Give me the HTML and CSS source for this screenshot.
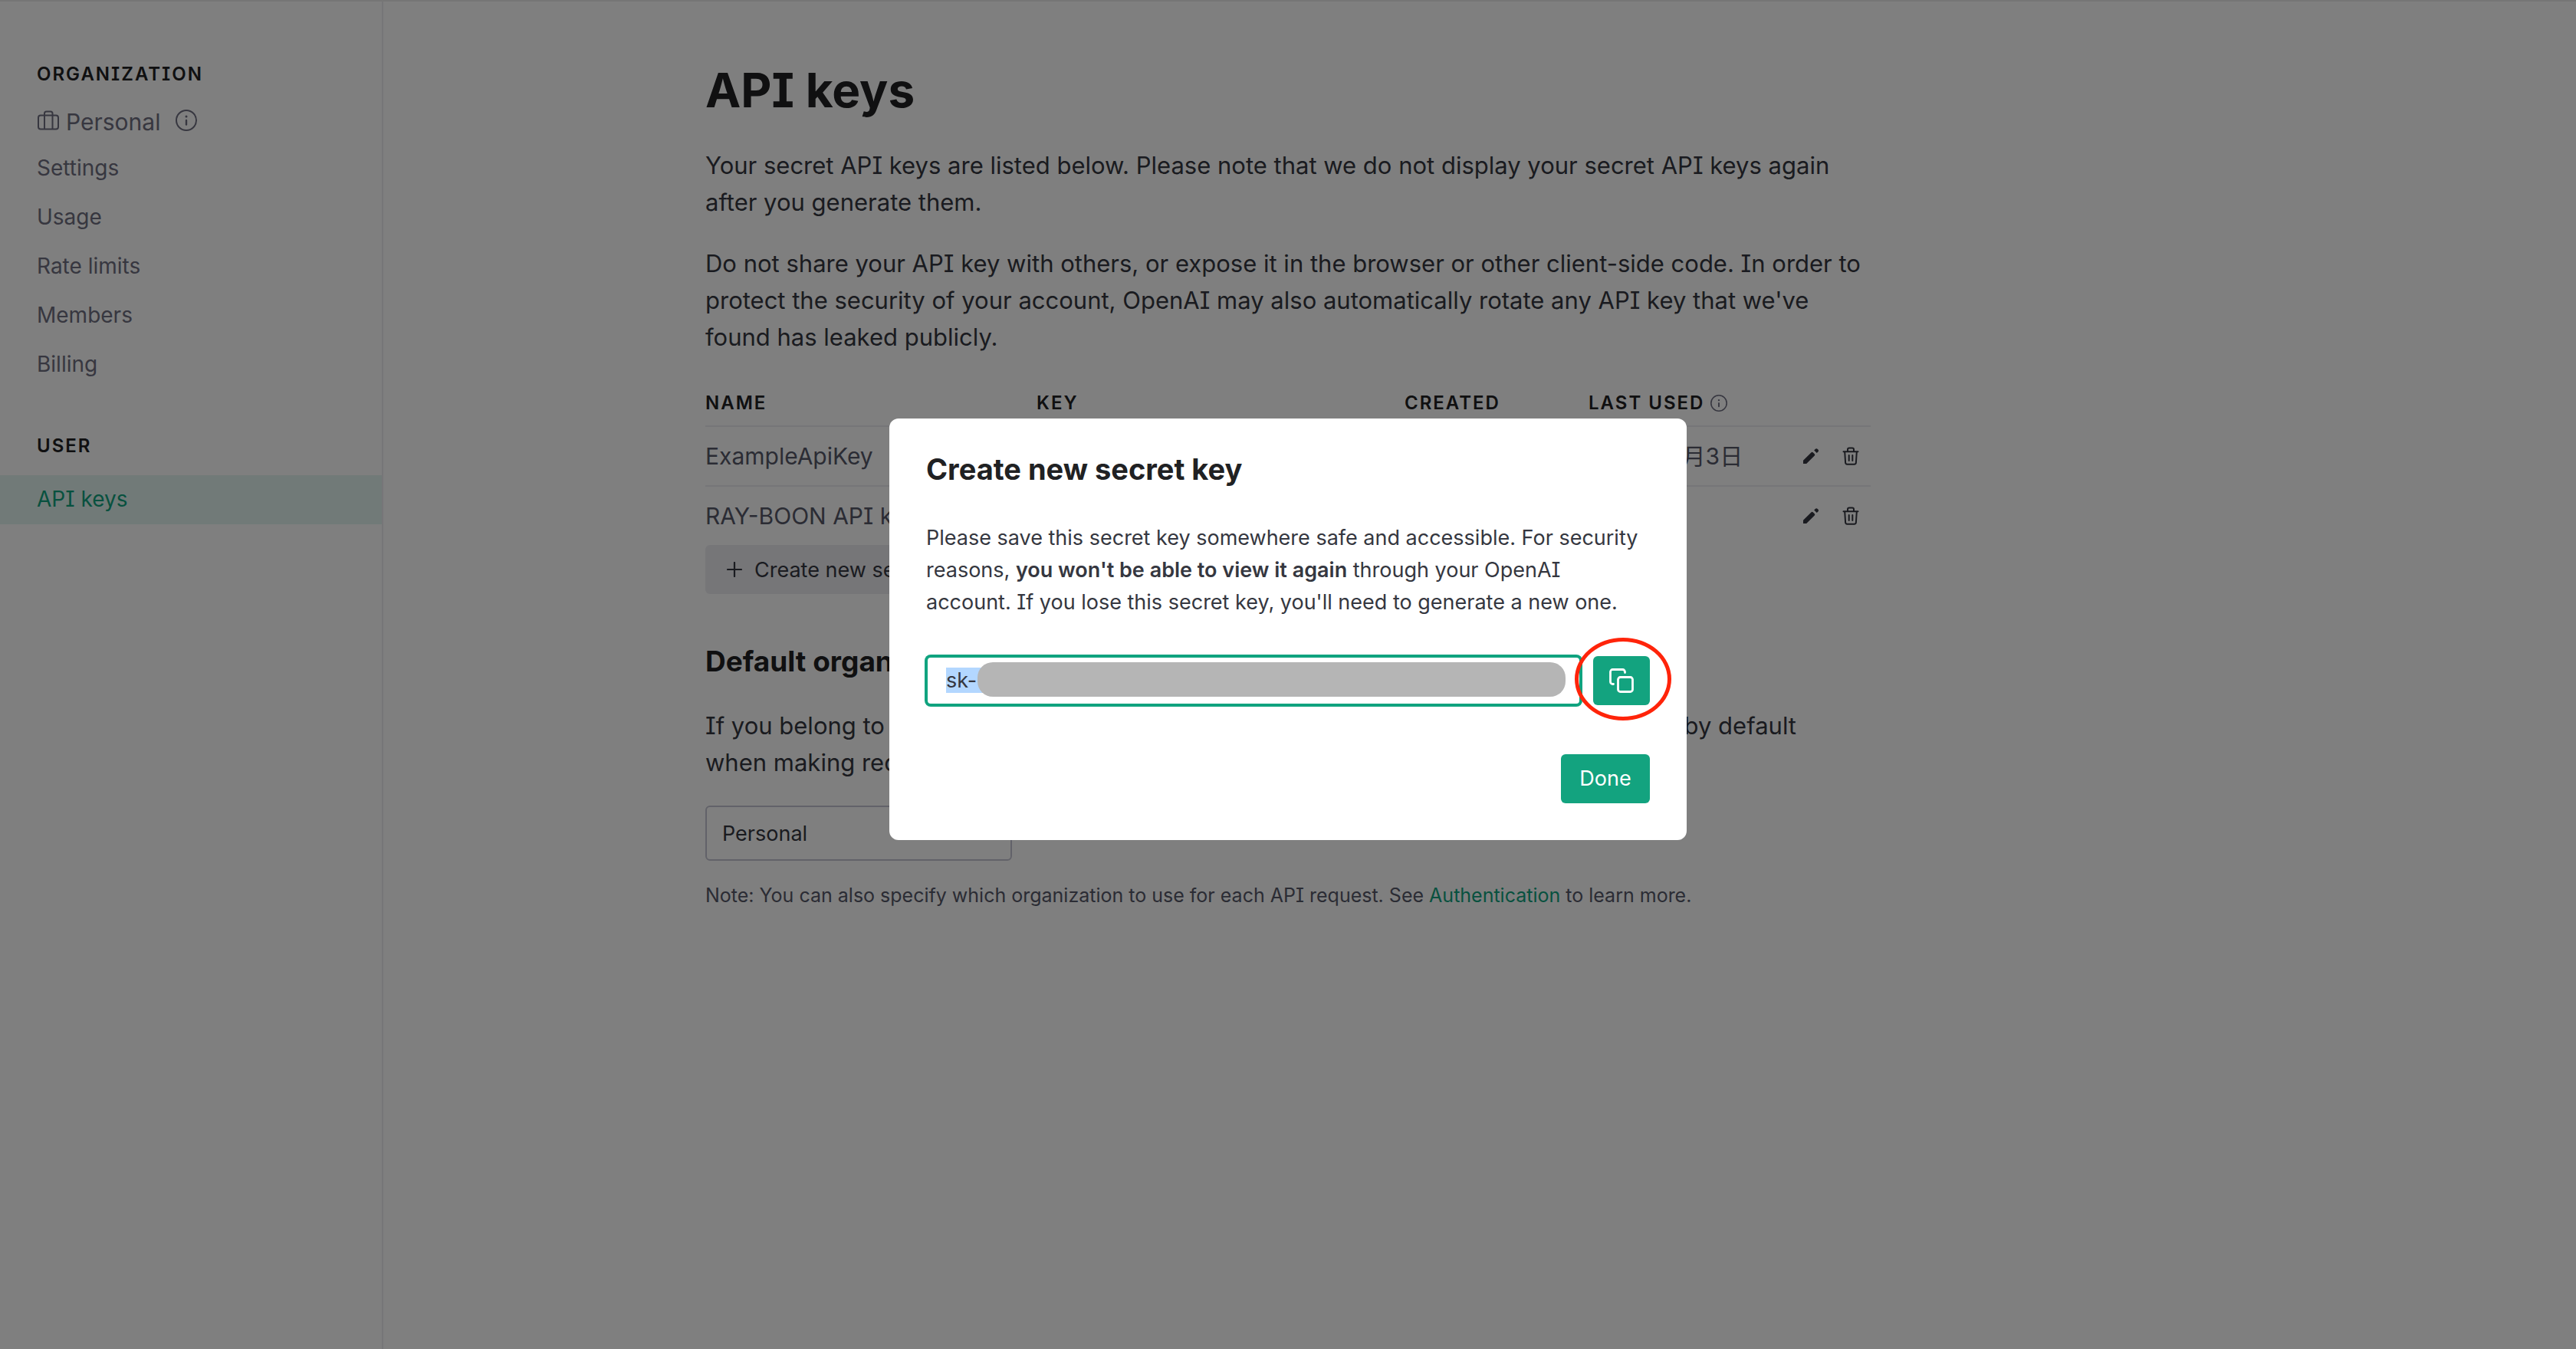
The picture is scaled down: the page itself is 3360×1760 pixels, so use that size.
FILE: index.html
```html
<!DOCTYPE html>
<html lang="en">
<head>
<meta charset="utf-8">
<title>API keys</title>
<link rel="stylesheet" href="styles.css">
</head>
<body>
<svg class="sprite" aria-hidden="true">
  <symbol id="info" viewBox="0 0 28 28"><circle cx="14" cy="14" r="13" fill="none" stroke="currentColor" stroke-width="2"/><path d="M14 14v5.500" fill="none" stroke="currentColor" stroke-width="2.400" stroke-linecap="round"/><circle cx="14" cy="9" r="1.500" fill="currentColor"/></symbol>
  <symbol id="pencil" viewBox="0 0 24 24"><path fill="currentColor" d="M2 22v-4.200L12.600 7.200a1.500 1.500 0 0 1 2.100 0l2.100 2.100a1.500 1.500 0 0 1 0 2.100L6.200 22zM16.200 4.600l1.500-1.700a2.200 2.200 0 0 1 3.100 0l.6.6a2.200 2.200 0 0 1 0 3.100l-1.700 1.500z"/></symbol>
  <symbol id="trash" viewBox="0 0 24 24"><path fill="none" stroke="currentColor" stroke-width="2" stroke-linecap="round" stroke-linejoin="round" d="M2.500 6.200h19M8 6V3.500a2 2 0 0 1 2-2h4a2 2 0 0 1 2 2V6M4.200 6.500l.9 14a2.300 2.300 0 0 0 2.300 2.200h9.200a2.300 2.300 0 0 0 2.300-2.200l.9-14M9.700 11v7M14.300 11v7"/></symbol>
</svg>

<div class="page">
  <nav class="sidebar" aria-label="Account">
    <h2 class="label">ORGANIZATION</h2>
    <div class="org">
      <svg class="org-icon" viewBox="0 0 30 28" aria-hidden="true"><g fill="none" stroke="currentColor" stroke-width="2"><rect x="2" y="7.500" width="26" height="18" rx="3"/><path d="M10 25.500V5a2.500 2.500 0 0 1 2.500-2.500h5.500A2.500 2.500 0 0 1 20.500 5v20.500"/></g></svg>
      <span class="org-name">Personal</span>
      <svg class="info-icon" aria-hidden="true"><use href="#info"/></svg>
    </div>
    <ul class="links">
      <li><a href="#settings">Settings</a></li>
      <li><a href="#usage">Usage</a></li>
      <li><a href="#limits">Rate limits</a></li>
      <li><a href="#members">Members</a></li>
      <li><a href="#billing">Billing</a></li>
    </ul>
    <h2 class="label user-label">USER</h2>
    <ul class="links">
      <li><a class="current" href="#keys" aria-current="page">API keys</a></li>
    </ul>
  </nav>

  <main class="main">
    <div class="content">
      <h1>API keys</h1>
      <p class="copy">Your secret API keys are listed below. Please note that we do not display your secret API keys again after you generate them.</p>
      <p class="copy">Do not share your API key with others, or expose it in the browser or other client-side code. In order to protect the security of your account, OpenAI may also automatically rotate any API key that we've found has leaked publicly.</p>

      <table class="keys">
        <colgroup><col class="c-name"><col class="c-key"><col class="c-created"><col class="c-used"><col class="c-actions"></colgroup>
        <thead>
          <tr>
            <th scope="col">NAME</th>
            <th scope="col">KEY</th>
            <th scope="col">CREATED</th>
            <th scope="col"><span class="used">LAST USED <svg class="info-small" aria-hidden="true"><use href="#info"/></svg></span></th>
            <td></td>
          </tr>
        </thead>
        <tbody>
          <tr>
            <td>ExampleApiKey</td>
            <td></td>
            <td></td>
            <td>2023年8月3日</td>
            <td><div class="actions"><button aria-label="Edit"><svg><use href="#pencil"/></svg></button><button aria-label="Delete"><svg><use href="#trash"/></svg></button></div></td>
          </tr>
          <tr>
            <td>RAY-BOON API key</td>
            <td></td>
            <td></td>
            <td></td>
            <td><div class="actions"><button aria-label="Edit"><svg><use href="#pencil"/></svg></button><button aria-label="Delete"><svg><use href="#trash"/></svg></button></div></td>
          </tr>
        </tbody>
      </table>

      <button class="create"><svg viewBox="0 0 20 20" aria-hidden="true"><path d="M10 1v18M1 10h18" stroke="currentColor" stroke-width="2.200" stroke-linecap="round"/></svg>Create new secret key</button>

      <h2 class="section"><label for="org">Default organization</label></h2>
      <p class="copy">If you belong to multiple organizations, this setting controls which organization is used by default<br>when making requests with the API keys above.</p>
      <select id="org" class="select"><option>Personal</option></select>
      <p class="note">Note: You can also specify which organization to use for each API request. See <a href="#auth">Authentication</a> to learn more.</p>
    </div>
  </main>
</div>

<div class="backdrop">
  <section class="modal" role="dialog" aria-modal="true" aria-labelledby="modal-title">
    <h2 id="modal-title" class="modal-title">Create new secret key</h2>
    <p class="modal-copy">Please save this secret key somewhere safe and accessible. For security reasons, <strong>you won't be able to view it again</strong> through your OpenAI account. If you lose this secret key, you'll need to generate a new one.</p>
    <div class="key-row">
      <div class="key-field">
        <input id="secret" type="text" value="sk-  " aria-label="Secret key" readonly>
        <span class="mask"></span>
      </div>
      <div class="copy-wrap">
        <button class="primary copy-button" aria-label="Copy"><svg viewBox="0 0 32 32" aria-hidden="true"><g fill="none" stroke="currentColor" stroke-width="2.800" stroke-linecap="round" stroke-linejoin="round"><path d="M20.500 5.500V4.500a3 3 0 0 0-3-3h-13a3 3 0 0 0-3 3v13a3 3 0 0 0 3 3h1"/><rect x="11.500" y="11.500" width="19" height="19" rx="3"/></g></svg></button>
        <span class="ring"></span>
      </div>
    </div>
    <button class="primary done">Done</button>
  </section>
</div>
<script>
document.getElementById('secret').select();
</script>
</body>
</html>
```
FILE: styles.css
```css
* { box-sizing: border-box; }

body {
  margin: 0;
  border-top: 2px solid #ececec;
  background: #fff;
  color: #353740;
  font-family: Inter, "Noto Sans CJK SC", sans-serif;
  font-feature-settings: "cv08";
}

h1, h2, p, ul { margin: 0; padding: 0; }
ul { list-style: none; }
a { color: #10a37f; text-decoration: none; }
button, input, select { font: inherit; font-feature-settings: inherit; color: inherit; }
button { margin: 0; padding: 0; border: 0; background: none; }
svg { display: block; flex: none; }
.sprite { position: absolute; width: 0; height: 0; }

.page { display: flex; min-height: calc(100vh - 2px); }

.sidebar {
  flex: none;
  width: 500px;
  padding-top: 75px;
  border-right: 2px solid #ececf1;
  color: #6e6e80;
}
.label {
  padding-left: 48px;
  color: #202123;
  font-size: 24px;
  font-weight: 600;
  line-height: 40px;
  letter-spacing: 2px;
}
.org {
  display: flex;
  align-items: center;
  gap: 8px;
  margin: 21px 0 8px;
  padding-left: 48px;
  font-size: 30px;
  line-height: 42px;
}
.org-icon { width: 30px; height: 28px; margin-bottom: 4px; }
.org-name { margin-right: 12px; }
.info-icon { width: 28px; height: 28px; margin-bottom: 4px; }
.links a {
  display: block;
  padding-left: 48px;
  color: inherit;
  font-size: 28px;
  line-height: 62px;
  padding-bottom: 2px;
}
.links .current { background: #e3f5f1; color: #10a37f; }
.user-label { margin: 54px 0 18px; }

.main { flex: 1; padding: 80px 500px 80px 0; }
.content { max-width: 1520px; margin: 0 auto; }
h1 {
  margin-bottom: 38px;
  color: #202123;
  font-size: 62px;
  font-weight: 700;
  line-height: 72px;
}
.copy { margin-bottom: 32px; font-size: 31px; line-height: 48px; }

.keys {
  width: 100%;
  table-layout: fixed;
  border-collapse: separate;
  border-spacing: 0;
  color: #565869;
  font-size: 30px;
}
.c-name { width: 432px; }
.c-key { width: 480px; }
.c-created { width: 240px; }
.c-used { width: 224px; }
.c-actions { width: 144px; }
.keys th, .keys td { padding: 0; text-align: left; white-space: nowrap; }
.keys th {
  height: 61px;
  color: #202123;
  font-size: 24px;
  font-weight: 600;
  letter-spacing: 2px;
}
.keys thead th, .keys thead td, .keys tbody tr:first-child td { border-bottom: 2px solid #ececf1; }
.keys tbody td { height: 78px; line-height: 40px; }
.keys tbody tr:last-child td { height: 76px; }
.used { display: flex; align-items: center; gap: 8px; color: #202123; }
.info-small { width: 22px; height: 22px; color: #6e6e80; }
.actions { display: flex; justify-content: flex-end; gap: 28px; padding-right: 14px; color: #353740; }
.actions svg { width: 24px; height: 24px; }

.create {
  display: flex;
  align-items: center;
  gap: 16px;
  height: 64px;
  padding: 0 28px;
  border-radius: 6px;
  background: #ececf1;
  font-size: 27px;
}
.create svg { width: 20px; height: 20px; }

.section {
  margin: 64px 0 36px;
  color: #202123;
  font-size: 37px;
  font-weight: 700;
  line-height: 48px;
}
.select {
  display: block;
  width: 400px;
  height: 72px;
  padding: 0 20px;
  border: 2px solid #c5c5d2;
  border-radius: 6px;
  background: transparent;
  appearance: none;
  font-size: 27px;
}
.note { margin-top: 25px; color: #565869; font-size: 25px; line-height: 40px; }

.backdrop {
  position: fixed;
  inset: 0;
  display: flex;
  align-items: center;
  justify-content: center;
  padding-bottom: 118px;
  background: rgba(0, 0, 0, 0.5);
}
.modal {
  display: flex;
  flex-direction: column;
  width: 1040px;
  padding: 42px 48px 48px;
  border-radius: 12px;
  background: #fff;
}
.modal-title { color: #202123; font-size: 38px; font-weight: 700; line-height: 48px; }
.modal-copy { margin: 45px 0 49px; font-size: 27px; line-height: 42px; }
.modal-copy strong { font-weight: 600; }
.key-row { display: flex; gap: 16px; }
.key-field { position: relative; flex: 1; }
.key-field input {
  display: block;
  width: 100%;
  height: 64px;
  padding: 0 24px 2px;
  border: 2px solid #10a37f;
  border-radius: 6px;
  outline: 0;
  background: #fff;
  box-shadow: 0 0 0 2px #10a37f;
  font-size: 27px;
  line-height: 36px;
}
.key-field input::selection { background: #b3d7ff; color: #353740; }
.mask {
  position: absolute;
  top: 8px;
  bottom: 11px;
  left: 67px;
  right: 20px;
  border-radius: 20px;
  background: #b5b5b5;
}
.copy-wrap { position: relative; }
.primary { height: 64px; border-radius: 6px; background: #13a37f; color: #fff; font-size: 27px; }
.copy-button { display: grid; place-items: center; width: 74px; }
.copy-button svg { width: 32px; height: 32px; }
.ring {
  position: absolute;
  inset: -24px -28px -20px -24px;
  border: 5px solid #ff240a;
  border-radius: 50%;
}
.done { align-self: flex-end; min-width: 116px; margin-top: 64px; padding: 0 24px 2px; }
```
